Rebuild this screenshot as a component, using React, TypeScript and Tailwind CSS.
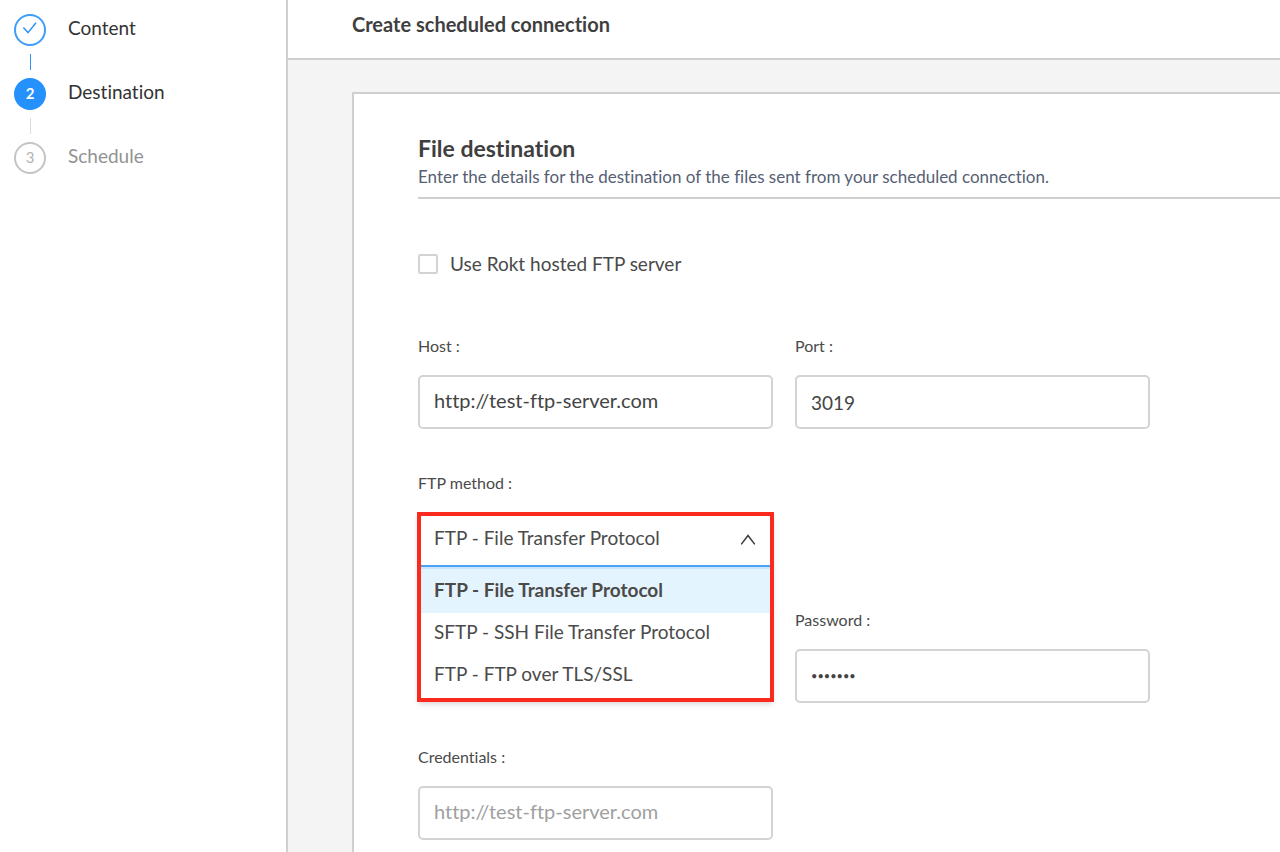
import React, { useState } from 'react';

const steps = [
  { label: 'Content', state: 'done' },
  { label: 'Destination', state: 'current' },
  { label: 'Schedule', state: 'upcoming' },
];

const ftpMethods = [
  'FTP - File Transfer Protocol',
  'SFTP - SSH File Transfer Protocol',
  'FTP - FTP over TLS/SSL',
];

function StepBadge({ state, number }: { state: string; number: number }) {
  if (state === 'done') {
    return (
      <span className="w-8 h-8 rounded-full border-2 border-[#3d9dfa] flex items-center justify-center">
        <svg width="16" height="16" viewBox="0 0 16 16" fill="none" stroke="#2b93fb" strokeWidth="1.5" aria-hidden="true">
          <path d="M1.4 5.6L6 10.6L14 0.8" />
        </svg>
      </span>
    );
  }

  return (
    <span
      className={`w-8 h-8 rounded-full flex items-center justify-center pb-0.5 text-[15px] ${
        state === 'current' ? 'bg-[#2491fc] text-white font-bold' : 'border-2 border-[#c4c4c4] text-[#b4b4b4]'
      }`}
    >
      {number}
    </span>
  );
}

function Sidebar() {
  return (
    <nav className="w-72 shrink-0 border-r-2 border-[#cfcfcf] px-3.5 py-3.5" aria-label="Steps">
      <ol>
        {steps.map((step, index) => (
          <li key={step.label}>
            {index > 0 && (
              <div className="w-8 h-8 flex items-center justify-center">
                <div className={`w-px h-4 ${step.state === 'current' ? 'bg-[#2b93fb]' : 'bg-[#dcdcdc]'}`}></div>
              </div>
            )}
            <div className="flex items-start gap-[22px]">
              <StepBadge state={step.state} number={index + 1} />
              <span className={`text-[19px] leading-7 ${step.state === 'upcoming' ? 'text-[#929292]' : 'text-[#333333]'}`}>
                {step.label}
              </span>
            </div>
          </li>
        ))}
      </ol>
    </nav>
  );
}

interface FieldProps {
  id: string;
  label: string;
  type?: string;
  defaultValue?: string;
  placeholder?: string;
  className?: string;
  inputClassName?: string;
}

function Field({ id, label, type = 'text', defaultValue, placeholder, className = '', inputClassName = 'text-[19px]' }: FieldProps) {
  return (
    <div className={className}>
      <label htmlFor={id} className="block text-base leading-6 text-[#4a4a4a]">{label} :</label>
      <input
        id={id}
        type={type}
        defaultValue={defaultValue}
        placeholder={placeholder}
        className={`mt-[17px] block w-full h-[54px] rounded-[5px] border-2 border-[#d3d3d3] bg-white px-3.5 text-[#444444] placeholder:text-[#a0a0a0] outline-none ${inputClassName}`}
      />
    </div>
  );
}

function MethodSelect() {
  const [method, setMethod] = useState(ftpMethods[0]);

  return (
    <div>
      <label htmlFor="ftp-method" className="block text-base leading-6 text-[#4a4a4a]">FTP method :</label>
      <div className="relative mt-[17px] h-[54px]">
        <div className="absolute -inset-x-px top-0 z-10 border-4 border-[#fb2a1f] bg-white shadow-md">
          <div className="relative">
            <select
              id="ftp-method"
              value={method}
              onChange={(e) => setMethod(e.target.value)}
              className="block w-full h-[51px] appearance-none border-b-2 border-[#4aa3f5] bg-white pl-[13px] pr-10 pb-1 text-[19px] text-[#4a4a4a] outline-none"
            >
              {ftpMethods.map((item) => (
                <option key={item}>{item}</option>
              ))}
            </select>
            <svg
              className="pointer-events-none absolute right-3.5 top-4 text-[#3a3a3a]"
              width="16"
              height="16"
              viewBox="0 0 16 16"
              fill="none"
              stroke="currentColor"
              strokeWidth="1.5"
              aria-hidden="true"
            >
              <path d="M1.2 12.4L8 3.6L14.8 12.4" />
            </svg>
          </div>
          <ul className="border-t-2 border-[#cbe5fb] pb-px" aria-label="FTP method options">
            {ftpMethods.map((item) => (
              <li key={item} className={item === method ? 'bg-[#e4f4fe] pt-0.5' : ''}>
                <button
                  type="button"
                  onClick={() => setMethod(item)}
                  className={`block w-full h-[42px] px-[13px] pb-1 text-left text-[19px] text-[#4a4a4a] ${
                    item === method ? 'font-bold' : ''
                  }`}
                >
                  {item}
                </button>
              </li>
            ))}
          </ul>
        </div>
      </div>
    </div>
  );
}

export default function App() {
  return (
    <div className="flex min-h-screen bg-white font-['Lato','Liberation_Sans',sans-serif] [font-variant-ligatures:none]">
      <Sidebar />
      <div className="flex-1 min-w-0 flex flex-col">
        <header className="border-b-2 border-[#cfcfcf] px-16 pt-2.5 pb-5">
          <h1 className="text-xl leading-7 font-bold text-[#3f3f3f]">Create scheduled connection</h1>
        </header>

        <main className="flex-1 flex flex-col bg-[#f4f4f4] pl-16 pt-8">
          <form className="flex-1 bg-white border-l-2 border-t-2 border-[#cfcfcf] pl-16 pt-[38px] pb-3">
            <div className="border-b-2 border-[#cfcfcf] pb-2">
              <h2 className="text-[23px] leading-8 font-bold text-[#3f3f3f]">File destination</h2>
              <p className="mt-px text-[17px] leading-6 text-[#566074]">
                Enter the details for the destination of the files sent from your scheduled connection.
              </p>
            </div>

            <div className="mt-[49px] flex items-center gap-3">
              <input
                id="hosted"
                type="checkbox"
                className="w-5 h-5 appearance-none rounded-xs border-2 border-[#d3d3d3] bg-white checked:bg-[#2491fc]"
              />
              <label htmlFor="hosted" className="text-[19px] leading-8 text-[#4a4a4a]">Use Rokt hosted FTP server</label>
            </div>

            <div className="mt-[54px] mr-[130px] grid grid-cols-2 gap-x-[22px] gap-y-[42px]">
              <Field id="host" label="Host" defaultValue="http://test-ftp-server.com" inputClassName="text-xl pb-1" />
              <Field id="port" label="Port" defaultValue="3019" />
              <MethodSelect />
              <Field
                id="password"
                label="Password"
                type="password"
                defaultValue="rokt123"
                className="col-start-2 row-start-3"
                inputClassName="text-[11px] pb-0.5"
              />
              <Field
                id="credentials"
                label="Credentials"
                placeholder="http://test-ftp-server.com"
                className="row-start-4"
                inputClassName="text-xl pb-1"
              />
            </div>
          </form>
        </main>
      </div>
    </div>
  );
}
